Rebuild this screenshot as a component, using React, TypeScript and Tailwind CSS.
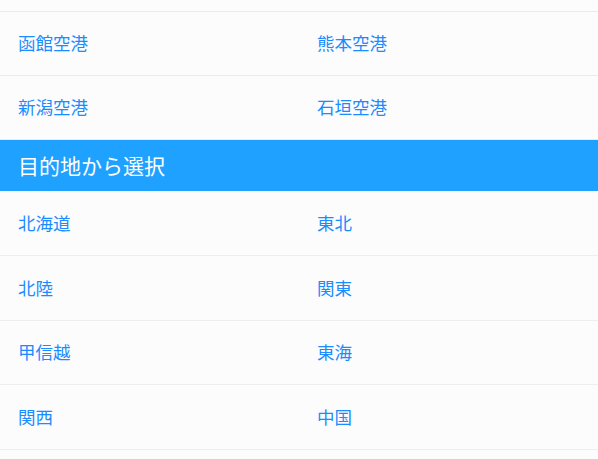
const airports = [
  ["函館空港", "熊本空港"],
  ["新潟空港", "石垣空港"],
];

const regions = [
  { items: ["北海道", "東北"], h: "h-[65px]" },
  { items: ["北陸", "関東"], h: "h-[65px]" },
  { items: ["甲信越", "東海"], h: "h-[64px]" },
  { items: ["関西", "中国"], h: "h-[65px]" },
];

function Row({ items, border, h }: { items: string[]; border: string; h: string }) {
  return (
    <div className={`grid grid-cols-2 items-center border-b ${h} ${border}`}>
      {items.map((name) => (
        <a key={name} href="#" className="pl-[18px] text-[17.5px] text-[#1a8cff]">
          {name}
        </a>
      ))}
    </div>
  );
}

export default function App() {
  return (
    <div
      className="w-[598px] h-[459px] overflow-hidden bg-[#fcfcfd]"
      style={{ fontFamily: '"Noto Sans CJK JP", "Noto Sans", sans-serif' }}
    >
      <div className="h-[12px] border-b border-[#e8ecf0]" />
      {airports.map((r) => (
        <Row key={r[0]} items={r} h="h-[64px]" border="border-[#e3edf7]" />
      ))}
      <h2 className="h-[51px] flex items-center pl-[18px] bg-[#1ea1ff] text-white text-[21px]">
        目的地から選択
      </h2>
      {regions.map((r) => (
        <Row key={r.items[0]} items={r.items} h={r.h} border="border-[#eeeeee]" />
      ))}
    </div>
  );
}
